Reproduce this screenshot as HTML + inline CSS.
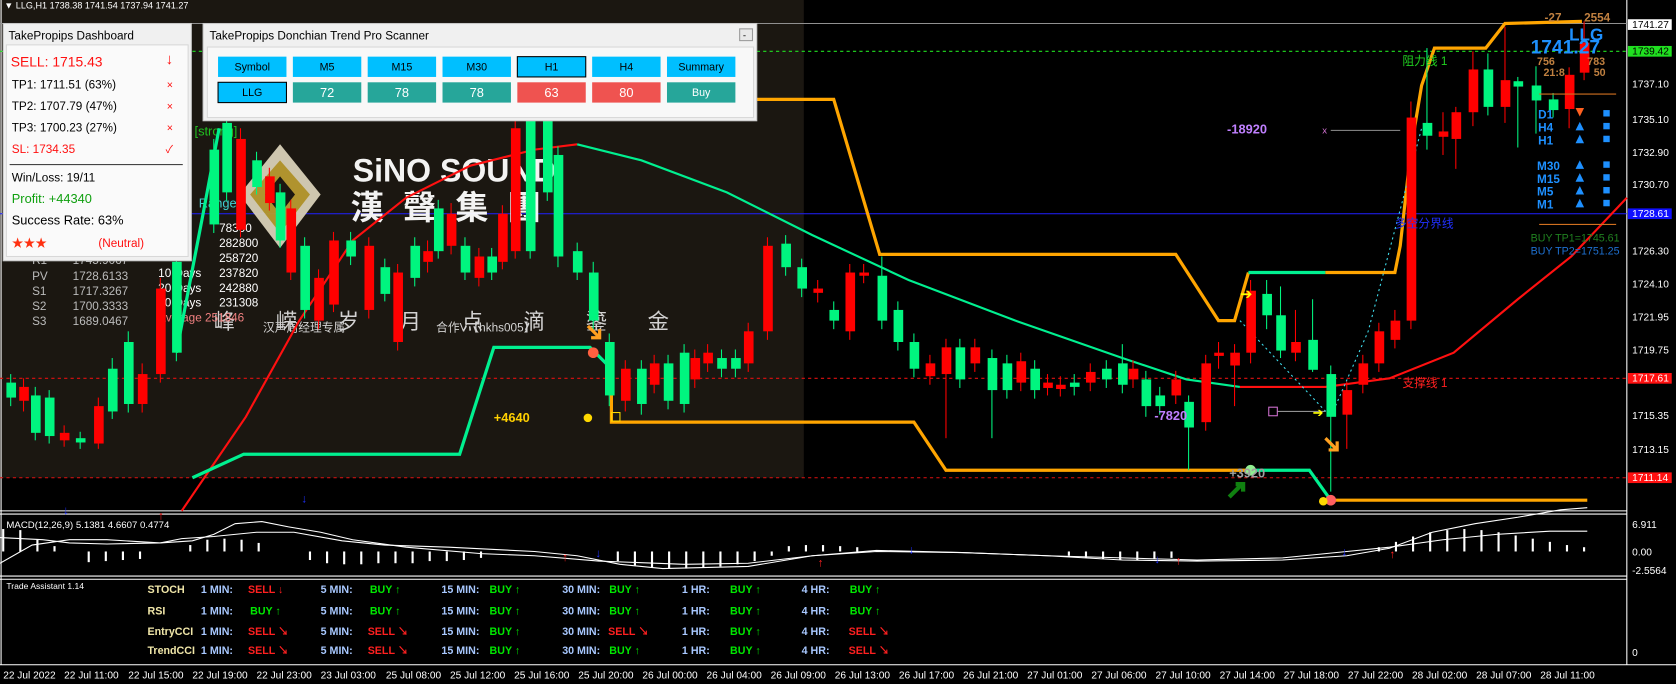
<!DOCTYPE html>
<html><head><meta charset="utf-8"><style>
html,body{margin:0;padding:0;background:#000;overflow:hidden}
svg{display:block}
text{font-family:"Liberation Sans","Noto Sans CJK SC",sans-serif}
.g rect{fill:#00f57f}.g line{stroke:#00f57f;stroke-width:1}
.r rect{fill:#ff0000}.r line{stroke:#ff0000;stroke-width:1}
.ax{font-size:9.5px;fill:#fff}
.ta{font-size:10px;font-weight:bold}
.lb{fill:#a8c8ff}.nm{fill:#f0e6a8}.by{fill:#00e800}.sl{fill:#ff2020}
.bt{font-size:10px;fill:#000;text-anchor:middle}
</style></head><body>
<svg width="1676" height="684" viewBox="0 0 1568 640" preserveAspectRatio="none" xmlns="http://www.w3.org/2000/svg">
<rect width="1568" height="640" fill="#000"/>
<rect x="0" y="0" width="752" height="447" fill="#1b1711"/>
<!-- borders -->
<line x1="1522" y1="0" x2="1522" y2="622" stroke="#fff"/>
<line x1="0" y1="478" x2="1522" y2="478" stroke="#fff"/>
<line x1="0" y1="481" x2="1522" y2="481" stroke="#fff"/>
<line x1="0" y1="539" x2="1522" y2="539" stroke="#fff"/>
<line x1="0" y1="542" x2="1522" y2="542" stroke="#fff"/>
<line x1="0" y1="622" x2="1568" y2="622" stroke="#fff"/>
<line x1="1" y1="0" x2="1" y2="622" stroke="#fff"/>
<!-- horizontal lines -->
<line x1="0" y1="22" x2="1522" y2="22" stroke="#909090"/>
<line x1="0" y1="48" x2="1522" y2="48" stroke="#20e020" stroke-dasharray="3,3"/>
<line x1="0" y1="200" x2="1522" y2="200" stroke="#2020ff"/>
<line x1="0" y1="354" x2="1522" y2="354" stroke="#e01010" stroke-dasharray="3,3"/>
<line x1="0" y1="447" x2="1522" y2="447" stroke="#e01010" stroke-dasharray="3,3"/>
<!-- watermark -->
<g opacity="0.95">
<polygon points="262,135 300,182 262,232 224,182" fill="#d8d0b8"/>
<polygon points="262,150 290,182 262,218 234,182" fill="#b89a30"/>
<polygon points="262,165 276,182 262,200 248,182" fill="#1b1711"/>
<text x="330" y="170" font-size="30" font-weight="bold" fill="#fff">SiNO SOUND</text>
<text x="328" y="205" font-size="31" font-weight="bold" fill="#fff" letter-spacing="18">漢聲集團</text>
<text x="200" y="308" font-size="20" fill="#ddd" letter-spacing="38">峰嵘岁月点滴鎏金</text>
<text x="246" y="310" font-size="11" fill="#ddd">汉声周经理专属</text>
<text x="408" y="310" font-size="11" fill="#ddd">合作V【hkhs005】</text>
</g>
<g font-size="11" fill="#bbb">
<text x="30" y="247">R1</text><text x="68" y="247">1745.9067</text>
<text x="30" y="262">PV</text><text x="68" y="262">1728.6133</text>
<text x="30" y="276">S1</text><text x="68" y="276">1717.3267</text>
<text x="30" y="290">S2</text><text x="68" y="290">1700.3333</text>
<text x="30" y="304">S3</text><text x="68" y="304">1689.0467</text>
</g>
<g font-size="11" fill="#fff">
<text x="205" y="217">78300</text><text x="205" y="231">282800</text><text x="205" y="245">258720</text>
<text x="148" y="259">10 Days</text><text x="205" y="259">237820</text>
<text x="148" y="273">20 Days</text><text x="205" y="273">242880</text>
<text x="148" y="287">50 Days</text><text x="205" y="287">231308</text>
<text x="148" y="301" fill="#f08080">Average  251846</text>
</g>
<text x="182" y="127" font-size="12" fill="#20c020">[strong]</text>
<text x="186" y="194" font-size="12" fill="#40d0d0">Range+</text>
<!-- MAs -->
<polyline points="170,478 230,390 280,300 330,225 380,185 440,155 500,140 540,135" fill="none" stroke="#ff1010" stroke-width="2"/>
<polyline points="540,135 600,150 680,180 760,220 850,262 950,300 1050,335 1110,355 1160,362" fill="none" stroke="#00f090" stroke-width="2"/>
<polyline points="1160,362 1240,362 1300,354 1360,330 1420,280 1470,240 1522,185" fill="none" stroke="#ff1010" stroke-width="2"/>
<!-- donchian -->
<polyline points="180,447 228,425 430,425 462,325 552,325 572,345" fill="none" stroke="#00f090" stroke-width="3"/>
<polyline points="165,330 190,200 205,120" fill="none" stroke="#00f090" stroke-width="3"/>
<polyline points="572,345 572,395 855,395 885,440 1168,440" fill="none" stroke="#ffa500" stroke-width="3"/>
<polyline points="1168,440 1225,440 1245,468" fill="none" stroke="#00f090" stroke-width="3"/>
<polyline points="1245,468 1485,468" fill="none" stroke="#ffa500" stroke-width="3"/>
<polyline points="700,93 780,93 823,238 1100,238 1140,300 1155,300 1168,255" fill="none" stroke="#ffa500" stroke-width="3"/>
<polyline points="1168,255 1240,255" fill="none" stroke="#00f090" stroke-width="3"/>
<polyline points="1240,255 1305,255 1310,230 1320,140 1330,80 1342,45 1390,45 1408,22 1480,20" fill="none" stroke="#ffa500" stroke-width="3"/>
<polyline points="1160,300 1245,390 1280,310 1330,120" fill="none" stroke="#40e0f0" stroke-dasharray="2,3"/>
<!-- candles -->
<g class="g"><line x1="10" y1="350" x2="10" y2="380"/><rect x="6" y="358" width="9" height="14"/></g>
<g class="r"><line x1="22" y1="354" x2="22" y2="385"/><rect x="18" y="362" width="9" height="13"/></g>
<g class="g"><line x1="33" y1="362" x2="33" y2="412"/><rect x="29" y="370" width="9" height="35"/></g>
<g class="g"><line x1="46" y1="365" x2="46" y2="415"/><rect x="42" y="372" width="9" height="36"/></g>
<g class="r"><line x1="60" y1="398" x2="60" y2="418"/><rect x="56" y="405" width="9" height="7"/></g>
<g class="g"><line x1="75" y1="404" x2="75" y2="420"/><rect x="71" y="410" width="9" height="4"/></g>
<g class="r"><line x1="92" y1="372" x2="92" y2="420"/><rect x="88" y="380" width="9" height="35"/></g>
<g class="g"><line x1="105" y1="335" x2="105" y2="392"/><rect x="101" y="345" width="9" height="40"/></g>
<g class="g"><line x1="120" y1="310" x2="120" y2="386"/><rect x="116" y="320" width="9" height="58"/></g>
<g class="r"><line x1="133" y1="340" x2="133" y2="386"/><rect x="129" y="350" width="9" height="28"/></g>
<g class="r"><line x1="150" y1="260" x2="150" y2="358"/><rect x="146" y="270" width="9" height="80"/></g>
<g class="g"><line x1="165" y1="235" x2="165" y2="338"/><rect x="161" y="245" width="9" height="85"/></g>
<g class="g"><line x1="200" y1="130" x2="200" y2="218"/><rect x="196" y="140" width="9" height="70"/></g>
<g class="g"><line x1="212" y1="105" x2="212" y2="188"/><rect x="208" y="115" width="9" height="65"/></g>
<g class="r"><line x1="225" y1="120" x2="225" y2="222"/><rect x="221" y="130" width="9" height="85"/></g>
<g class="g"><line x1="240" y1="142" x2="240" y2="182"/><rect x="236" y="150" width="9" height="25"/></g>
<g class="r"><line x1="252" y1="157" x2="252" y2="197"/><rect x="248" y="165" width="9" height="25"/></g>
<g class="g"><line x1="262" y1="172" x2="262" y2="232"/><rect x="258" y="180" width="9" height="45"/></g>
<g class="r"><line x1="272" y1="187" x2="272" y2="262"/><rect x="268" y="195" width="9" height="60"/></g>
<g class="g"><line x1="285" y1="222" x2="285" y2="298"/><rect x="281" y="230" width="9" height="60"/></g>
<g class="r"><line x1="298" y1="252" x2="298" y2="308"/><rect x="294" y="260" width="9" height="40"/></g>
<g class="r"><line x1="312" y1="217" x2="312" y2="292"/><rect x="308" y="225" width="9" height="60"/></g>
<g class="g"><line x1="328" y1="217" x2="328" y2="248"/><rect x="324" y="225" width="9" height="15"/></g>
<g class="r"><line x1="345" y1="222" x2="345" y2="298"/><rect x="341" y="230" width="9" height="60"/></g>
<g class="g"><line x1="360" y1="242" x2="360" y2="282"/><rect x="356" y="250" width="9" height="25"/></g>
<g class="r"><line x1="372" y1="247" x2="372" y2="328"/><rect x="368" y="255" width="9" height="65"/></g>
<g class="g"><line x1="388" y1="222" x2="388" y2="268"/><rect x="384" y="230" width="9" height="30"/></g>
<g class="r"><line x1="400" y1="225" x2="400" y2="255"/><rect x="396" y="235" width="9" height="10"/></g>
<g class="g"><line x1="410" y1="187" x2="410" y2="242"/><rect x="406" y="195" width="9" height="40"/></g>
<g class="r"><line x1="422" y1="190" x2="422" y2="238"/><rect x="418" y="200" width="9" height="30"/></g>
<g class="g"><line x1="435" y1="222" x2="435" y2="262"/><rect x="431" y="230" width="9" height="25"/></g>
<g class="r"><line x1="448" y1="232" x2="448" y2="268"/><rect x="444" y="240" width="9" height="20"/></g>
<g class="g"><line x1="460" y1="232" x2="460" y2="262"/><rect x="456" y="240" width="9" height="15"/></g>
<g class="r"><line x1="470" y1="192" x2="470" y2="252"/><rect x="466" y="200" width="9" height="45"/></g>
<g class="r"><line x1="482" y1="110" x2="482" y2="242"/><rect x="478" y="120" width="9" height="115"/></g>
<g class="g"><line x1="496" y1="85" x2="496" y2="242"/><rect x="492" y="95" width="9" height="140"/></g>
<g class="g"><line x1="512" y1="100" x2="512" y2="188"/><rect x="508" y="110" width="9" height="70"/></g>
<g class="g"><line x1="522" y1="137" x2="522" y2="250"/><rect x="518" y="145" width="9" height="95"/></g>
<g class="g"><line x1="540" y1="227" x2="540" y2="262"/><rect x="536" y="235" width="9" height="20"/></g>
<g class="g"><line x1="555" y1="245" x2="555" y2="310"/><rect x="551" y="255" width="9" height="45"/></g>
<g class="g"><line x1="570" y1="312" x2="570" y2="380"/><rect x="566" y="320" width="9" height="50"/></g>
<g class="r"><line x1="585" y1="337" x2="585" y2="385"/><rect x="581" y="345" width="9" height="30"/></g>
<g class="g"><line x1="600" y1="337" x2="600" y2="388"/><rect x="596" y="345" width="9" height="33"/></g>
<g class="r"><line x1="612" y1="332" x2="612" y2="368"/><rect x="608" y="340" width="9" height="20"/></g>
<g class="g"><line x1="625" y1="332" x2="625" y2="383"/><rect x="621" y="340" width="9" height="35"/></g>
<g class="g"><line x1="640" y1="322" x2="640" y2="386"/><rect x="636" y="330" width="9" height="48"/></g>
<g class="r"><line x1="650" y1="327" x2="650" y2="363"/><rect x="646" y="335" width="9" height="20"/></g>
<g class="r"><line x1="662" y1="322" x2="662" y2="348"/><rect x="658" y="330" width="9" height="10"/></g>
<g class="g"><line x1="675" y1="327" x2="675" y2="353"/><rect x="671" y="335" width="9" height="10"/></g>
<g class="g"><line x1="688" y1="327" x2="688" y2="353"/><rect x="684" y="335" width="9" height="10"/></g>
<g class="r"><line x1="700" y1="302" x2="700" y2="348"/><rect x="696" y="310" width="9" height="30"/></g>
<g class="r"><line x1="718" y1="222" x2="718" y2="318"/><rect x="714" y="230" width="9" height="80"/></g>
<g class="g"><line x1="735" y1="220" x2="735" y2="258"/><rect x="731" y="228" width="9" height="22"/></g>
<g class="g"><line x1="750" y1="242" x2="750" y2="278"/><rect x="746" y="250" width="9" height="20"/></g>
<g class="r"><line x1="765" y1="262" x2="765" y2="283"/><rect x="761" y="270" width="9" height="4"/></g>
<g class="g"><line x1="780" y1="282" x2="780" y2="308"/><rect x="776" y="290" width="9" height="10"/></g>
<g class="r"><line x1="795" y1="247" x2="795" y2="318"/><rect x="791" y="255" width="9" height="55"/></g>
<g class="r"><line x1="808" y1="247" x2="808" y2="265"/><rect x="804" y="255" width="9" height="3"/></g>
<g class="g"><line x1="825" y1="240" x2="825" y2="308"/><rect x="821" y="258" width="9" height="42"/></g>
<g class="g"><line x1="840" y1="282" x2="840" y2="328"/><rect x="836" y="290" width="9" height="30"/></g>
<g class="g"><line x1="855" y1="312" x2="855" y2="353"/><rect x="851" y="320" width="9" height="25"/></g>
<g class="r"><line x1="870" y1="332" x2="870" y2="360"/><rect x="866" y="340" width="9" height="12"/></g>
<g class="r"><line x1="885" y1="317" x2="885" y2="410"/><rect x="881" y="325" width="9" height="25"/></g>
<g class="g"><line x1="898" y1="317" x2="898" y2="363"/><rect x="894" y="325" width="9" height="30"/></g>
<g class="r"><line x1="912" y1="317" x2="912" y2="348"/><rect x="908" y="325" width="9" height="15"/></g>
<g class="g"><line x1="928" y1="327" x2="928" y2="410"/><rect x="924" y="335" width="9" height="30"/></g>
<g class="g"><line x1="942" y1="332" x2="942" y2="373"/><rect x="938" y="340" width="9" height="25"/></g>
<g class="r"><line x1="955" y1="330" x2="955" y2="366"/><rect x="951" y="338" width="9" height="20"/></g>
<g class="g"><line x1="968" y1="337" x2="968" y2="373"/><rect x="964" y="345" width="9" height="20"/></g>
<g class="r"><line x1="980" y1="350" x2="980" y2="370"/><rect x="976" y="358" width="9" height="5"/></g>
<g class="r"><line x1="992" y1="352" x2="992" y2="371"/><rect x="988" y="360" width="9" height="4"/></g>
<g class="g"><line x1="1005" y1="350" x2="1005" y2="370"/><rect x="1001" y="358" width="9" height="4"/></g>
<g class="r"><line x1="1020" y1="340" x2="1020" y2="366"/><rect x="1016" y="348" width="9" height="10"/></g>
<g class="g"><line x1="1035" y1="337" x2="1035" y2="363"/><rect x="1031" y="345" width="9" height="10"/></g>
<g class="g"><line x1="1050" y1="322" x2="1050" y2="368"/><rect x="1046" y="340" width="9" height="20"/></g>
<g class="r"><line x1="1060" y1="337" x2="1060" y2="363"/><rect x="1056" y="345" width="9" height="10"/></g>
<g class="g"><line x1="1072" y1="347" x2="1072" y2="390"/><rect x="1068" y="355" width="9" height="25"/></g>
<g class="g"><line x1="1085" y1="362" x2="1085" y2="388"/><rect x="1081" y="370" width="9" height="10"/></g>
<g class="r"><line x1="1100" y1="347" x2="1100" y2="378"/><rect x="1096" y="355" width="9" height="15"/></g>
<g class="g"><line x1="1112" y1="370" x2="1112" y2="440"/><rect x="1108" y="376" width="9" height="24"/></g>
<g class="r"><line x1="1128" y1="332" x2="1128" y2="403"/><rect x="1124" y="340" width="9" height="55"/></g>
<g class="r"><line x1="1140" y1="320" x2="1140" y2="345"/><rect x="1136" y="330" width="9" height="3"/></g>
<g class="r"><line x1="1155" y1="322" x2="1155" y2="380"/><rect x="1151" y="330" width="9" height="12"/></g>
<g class="r"><line x1="1170" y1="262" x2="1170" y2="340"/><rect x="1166" y="272" width="9" height="58"/></g>
<g class="g"><line x1="1185" y1="262" x2="1185" y2="308"/><rect x="1181" y="275" width="9" height="20"/></g>
<g class="g"><line x1="1198" y1="268" x2="1198" y2="335"/><rect x="1194" y="295" width="9" height="33"/></g>
<g class="r"><line x1="1212" y1="290" x2="1212" y2="338"/><rect x="1208" y="320" width="9" height="10"/></g>
<g class="g"><line x1="1228" y1="280" x2="1228" y2="348"/><rect x="1224" y="318" width="9" height="28"/></g>
<g class="g"><line x1="1245" y1="342" x2="1245" y2="460"/><rect x="1241" y="350" width="9" height="40"/></g>
<g class="r"><line x1="1260" y1="357" x2="1260" y2="420"/><rect x="1256" y="365" width="9" height="23"/></g>
<g class="r"><line x1="1275" y1="332" x2="1275" y2="368"/><rect x="1271" y="340" width="9" height="20"/></g>
<g class="r"><line x1="1290" y1="302" x2="1290" y2="348"/><rect x="1286" y="310" width="9" height="30"/></g>
<g class="r"><line x1="1305" y1="290" x2="1305" y2="326"/><rect x="1301" y="300" width="9" height="18"/></g>
<g class="r"><line x1="1320" y1="95" x2="1320" y2="308"/><rect x="1316" y="110" width="9" height="190"/></g>
<g class="g"><line x1="1335" y1="45" x2="1335" y2="140"/><rect x="1331" y="115" width="9" height="12"/></g>
<g class="r"><line x1="1350" y1="105" x2="1350" y2="145"/><rect x="1346" y="123" width="9" height="5"/></g>
<g class="r"><line x1="1362" y1="100" x2="1362" y2="158"/><rect x="1358" y="105" width="9" height="25"/></g>
<g class="r"><line x1="1378" y1="48" x2="1378" y2="118"/><rect x="1374" y="65" width="9" height="40"/></g>
<g class="g"><line x1="1392" y1="50" x2="1392" y2="108"/><rect x="1388" y="65" width="9" height="35"/></g>
<g class="r"><line x1="1408" y1="25" x2="1408" y2="115"/><rect x="1404" y="75" width="9" height="25"/></g>
<g class="g"><line x1="1420" y1="72" x2="1420" y2="138"/><rect x="1416" y="76" width="9" height="5"/></g>
<g class="g"><line x1="1437" y1="62" x2="1437" y2="125"/><rect x="1433" y="80" width="9" height="14"/></g>
<g class="g"><line x1="1453" y1="87" x2="1453" y2="110"/><rect x="1449" y="93" width="9" height="10"/></g>
<g class="r"><line x1="1468" y1="63" x2="1468" y2="120"/><rect x="1464" y="70" width="9" height="32"/></g>
<g class="r"><line x1="1482" y1="20" x2="1482" y2="75"/><rect x="1478" y="40" width="9" height="28"/></g>
<!-- markers -->
<circle cx="555" cy="330" r="5" fill="#ff6040"/>
<circle cx="550" cy="391" r="4" fill="#ffd800"/>
<rect x="572" y="386" width="8" height="8" fill="none" stroke="#ffd800"/>
<circle cx="1170" cy="440" r="5" fill="#90ee90"/>
<circle cx="1245" cy="468" r="5" fill="#ff6060"/>
<circle cx="1238" cy="469" r="4" fill="#ffd800"/>
<path d="M1150,465 L1162,453 M1156,453 L1163,453 L1163,460" stroke="#108010" stroke-width="4" fill="none"/>
<path d="M1240,410 L1250,420 M1243,421 L1251,421 L1251,413" stroke="#ffa020" stroke-width="3" fill="none"/>
<path d="M550,305 L560,315 M553,316 L561,316 L561,308" stroke="#ffa020" stroke-width="3" fill="none"/>
<line x1="1195" y1="385" x2="1240" y2="385" stroke="#909090"/>
<rect x="1187" y="381" width="8" height="8" fill="none" stroke="#d070d0"/>
<line x1="1245" y1="122" x2="1310" y2="122" stroke="#909090"/>
<text x="1237" y="125" font-size="9" fill="#d070d0">x</text>
<text x="1160" y="280" font-size="14" fill="#ffff00">➔</text>
<text x="1228" y="390" font-size="12" fill="#ffff00">➔</text>
<text x="1148" y="125" font-size="12" font-weight="bold" fill="#c080ff">-18920</text>
<text x="462" y="395" font-size="12" font-weight="bold" fill="#ffd000">+4640</text>
<text x="1080" y="393" font-size="12" font-weight="bold" fill="#c080ff">-7820</text>
<text x="1150" y="447" font-size="12" font-weight="bold" fill="#a0a0a0">+3920</text>
<text x="1312" y="61" font-size="11" fill="#20d020">阻力线 1</text>
<text x="1305" y="213" font-size="11" fill="#2030ff">多空分界线</text>
<text x="1312" y="362" font-size="11" fill="#ff2020">支撑线 1</text>
<!-- right info -->
<g font-weight="bold">
<text x="1445" y="20" font-size="11" fill="#c08040">-27</text>
<text x="1482" y="20" font-size="11" fill="#c08040">2554</text>
<text x="1468" y="38" font-size="16" fill="#1e90ff">LLG</text>
<text x="1432" y="50" font-size="18" fill="#1e90ff">1741.27</text>
<text x="1438" y="61" font-size="10" fill="#c08040">756</text><text x="1485" y="61" font-size="10" fill="#c08040">783</text>
<text x="1444" y="71" font-size="10" fill="#c08040">21:8</text><text x="1491" y="71" font-size="10" fill="#c08040">50</text>
<g font-size="11" fill="#1e90ff">
<text x="1439" y="111">D1</text><text x="1439" y="123">H4</text><text x="1439" y="135">H1</text>
<text x="1438" y="159">M30</text><text x="1438" y="171">M15</text><text x="1438" y="183">M5</text><text x="1438" y="195">M1</text>
</g></g>
<line x1="1440" y1="88" x2="1512" y2="88" stroke="#d07020"/>
<line x1="1440" y1="210" x2="1512" y2="210" stroke="#d07020"/>
<polygon points="1474,101 1482,101 1478,109" fill="#ff6020"/>
<g fill="#1e90ff">
<polygon points="1478,114 1482,122 1474,122"/><polygon points="1478,126 1482,134 1474,134"/>
<polygon points="1478,150 1482,158 1474,158"/><polygon points="1478,162 1482,170 1474,170"/>
<polygon points="1478,174 1482,182 1474,182"/><polygon points="1478,186 1482,194 1474,194"/>
<rect x="1500" y="103" width="6" height="6"/><rect x="1500" y="115" width="6" height="6"/><rect x="1500" y="127" width="6" height="6"/>
<rect x="1500" y="151" width="6" height="6"/><rect x="1500" y="163" width="6" height="6"/><rect x="1500" y="175" width="6" height="6"/><rect x="1500" y="187" width="6" height="6"/>
</g>
<text x="1432" y="226" font-size="10" fill="#208020">BUY TP1=1745.61</text>
<text x="1432" y="238" font-size="10" fill="#1e70d0">BUY TP2=1751.25</text>
<!-- price axis -->
<g class="ax">
<rect x="1523" y="18" width="41" height="10" fill="#fff"/><text x="1527" y="26" fill="#000">1741.27</text>
<rect x="1523" y="43" width="41" height="10" fill="#20e020"/><text x="1527" y="51" fill="#000">1739.42</text>
<text x="1527" y="82">1737.10</text><text x="1527" y="115">1735.10</text><text x="1527" y="146">1732.90</text>
<text x="1527" y="176">1730.70</text>
<rect x="1523" y="195" width="41" height="10" fill="#1010ff"/><text x="1527" y="203">1728.61</text>
<text x="1527" y="238">1726.30</text><text x="1527" y="269">1724.10</text><text x="1527" y="300">1721.95</text>
<text x="1527" y="331">1719.75</text>
<rect x="1523" y="349" width="41" height="10" fill="#ff1010"/><text x="1527" y="357">1717.61</text>
<text x="1527" y="392">1715.35</text><text x="1527" y="424">1713.15</text>
<rect x="1523" y="442" width="41" height="10" fill="#ff1010"/><text x="1527" y="450">1711.14</text>
<text x="1527" y="494">6.911</text><text x="1527" y="520">0.00</text><text x="1527" y="537">-2.5564</text>
<text x="1527" y="614">0</text>
</g>
<!-- MACD -->
<text x="6" y="494" font-size="9" fill="#fff">MACD(12,26,9) 5.1381 4.6607 0.4774</text>
<polyline points="0,527 30,510 65,505 100,505 150,508 180,506 200,500 220,490 245,488 270,493 300,498 330,505 380,512 450,518 500,520 560,525 640,528 700,527 760,520 820,516 900,517 980,520 1050,522 1120,524 1200,522 1260,516 1300,512 1350,505 1400,500 1450,497 1485,497" fill="none" stroke="#fff"/>
<polyline points="0,503 40,505 65,508 100,509 150,508 170,504 200,502 240,498 275,498 320,506 360,510 420,512 500,516 540,520 580,528 620,532 700,530 760,520 820,515 900,517 980,520 1050,524 1120,525 1200,524 1260,520 1300,513 1340,498 1380,490 1420,484 1460,477 1485,475" fill="none" stroke="#fff"/>
<g stroke="#fff" stroke-width="2">
<line x1="3" y1="516" x2="3" y2="495"/><line x1="19" y1="516" x2="19" y2="496"/><line x1="35" y1="516" x2="35" y2="505"/><line x1="51" y1="516" x2="51" y2="511"/>
<line x1="83" y1="516" x2="83" y2="526"/><line x1="99" y1="516" x2="99" y2="525"/><line x1="115" y1="516" x2="115" y2="524"/><line x1="131" y1="516" x2="131" y2="523"/>
<line x1="178" y1="516" x2="178" y2="510"/><line x1="194" y1="516" x2="194" y2="505"/><line x1="210" y1="516" x2="210" y2="504"/><line x1="226" y1="516" x2="226" y2="505"/><line x1="242" y1="516" x2="242" y2="508"/>
<line x1="290" y1="516" x2="290" y2="524"/><line x1="306" y1="516" x2="306" y2="527"/><line x1="322" y1="516" x2="322" y2="528"/><line x1="338" y1="516" x2="338" y2="528"/><line x1="354" y1="516" x2="354" y2="527"/><line x1="370" y1="516" x2="370" y2="527"/><line x1="386" y1="516" x2="386" y2="527"/><line x1="402" y1="516" x2="402" y2="525"/><line x1="418" y1="516" x2="418" y2="525"/><line x1="434" y1="516" x2="434" y2="524"/><line x1="450" y1="516" x2="450" y2="522"/>
<line x1="578" y1="516" x2="578" y2="525"/><line x1="594" y1="516" x2="594" y2="529"/><line x1="610" y1="516" x2="610" y2="531"/><line x1="626" y1="516" x2="626" y2="532"/><line x1="642" y1="516" x2="642" y2="532"/><line x1="658" y1="516" x2="658" y2="531"/><line x1="674" y1="516" x2="674" y2="530"/><line x1="690" y1="516" x2="690" y2="528"/><line x1="706" y1="516" x2="706" y2="525"/><line x1="722" y1="516" x2="722" y2="520"/>
<line x1="738" y1="516" x2="738" y2="511"/><line x1="754" y1="516" x2="754" y2="510"/><line x1="770" y1="516" x2="770" y2="510"/><line x1="786" y1="516" x2="786" y2="511"/><line x1="802" y1="516" x2="802" y2="512"/>
<line x1="1000" y1="516" x2="1000" y2="520"/><line x1="1016" y1="516" x2="1016" y2="522"/><line x1="1032" y1="516" x2="1032" y2="523"/><line x1="1048" y1="516" x2="1048" y2="524"/><line x1="1064" y1="516" x2="1064" y2="524"/><line x1="1080" y1="516" x2="1080" y2="523"/><line x1="1096" y1="516" x2="1096" y2="522"/>
<line x1="1290" y1="516" x2="1290" y2="512"/><line x1="1306" y1="516" x2="1306" y2="507"/><line x1="1322" y1="516" x2="1322" y2="502"/><line x1="1338" y1="516" x2="1338" y2="498"/><line x1="1354" y1="516" x2="1354" y2="496"/><line x1="1370" y1="516" x2="1370" y2="495"/><line x1="1386" y1="516" x2="1386" y2="496"/><line x1="1402" y1="516" x2="1402" y2="498"/><line x1="1418" y1="516" x2="1418" y2="501"/><line x1="1434" y1="516" x2="1434" y2="504"/><line x1="1450" y1="516" x2="1450" y2="507"/><line x1="1466" y1="516" x2="1466" y2="510"/><line x1="1482" y1="516" x2="1482" y2="512"/>
</g>
<g font-size="11">
<text x="59" y="481" fill="#2030ff">↓</text><text x="148" y="486" fill="#ff2020">↑</text><text x="282" y="470" fill="#2030ff">↓</text>
<text x="526" y="525" fill="#ff2020">↑</text><text x="557" y="521" fill="#2030ff">↓</text><text x="765" y="530" fill="#ff2020">↑</text>
<text x="850" y="518" fill="#2030ff">↓</text><text x="1080" y="527" fill="#2030ff">↓</text><text x="1100" y="528" fill="#ff2020">↑</text>
<text x="1255" y="520" fill="#2030ff">↓</text><text x="1300" y="522" fill="#ff2020">↑</text>
</g>
<!-- trade assistant -->
<text x="6" y="551" font-size="8" fill="#fff">Trade Assistant 1.14</text>
<g class="ta">
<text x="138" y="555" class="nm">STOCH</text><text x="138" y="575" class="nm">RSI</text><text x="138" y="594" class="nm">EntryCCI</text><text x="138" y="612" class="nm">TrendCCI</text>
<g class="lb">
<text x="188" y="555">1 MIN:</text><text x="188" y="575">1 MIN:</text><text x="188" y="594">1 MIN:</text><text x="188" y="612">1 MIN:</text>
<text x="300" y="555">5 MIN:</text><text x="300" y="575">5 MIN:</text><text x="300" y="594">5 MIN:</text><text x="300" y="612">5 MIN:</text>
<text x="413" y="555">15 MIN:</text><text x="413" y="575">15 MIN:</text><text x="413" y="594">15 MIN:</text><text x="413" y="612">15 MIN:</text>
<text x="526" y="555">30 MIN:</text><text x="526" y="575">30 MIN:</text><text x="526" y="594">30 MIN:</text><text x="526" y="612">30 MIN:</text>
<text x="638" y="555">1 HR:</text><text x="638" y="575">1 HR:</text><text x="638" y="594">1 HR:</text><text x="638" y="612">1 HR:</text>
<text x="750" y="555">4 HR:</text><text x="750" y="575">4 HR:</text><text x="750" y="594">4 HR:</text><text x="750" y="612">4 HR:</text>
</g>
<text x="232" y="555" class="sl">SELL ↓</text><text x="234" y="575" class="by">BUY ↑</text><text x="232" y="594" class="sl">SELL ↘</text><text x="232" y="612" class="sl">SELL ↘</text>
<text x="346" y="555" class="by">BUY ↑</text><text x="346" y="575" class="by">BUY ↑</text><text x="344" y="594" class="sl">SELL ↘</text><text x="344" y="612" class="sl">SELL ↘</text>
<text x="458" y="555" class="by">BUY ↑</text><text x="458" y="575" class="by">BUY ↑</text><text x="458" y="594" class="by">BUY ↑</text><text x="458" y="612" class="by">BUY ↑</text>
<text x="570" y="555" class="by">BUY ↑</text><text x="570" y="575" class="by">BUY ↑</text><text x="569" y="594" class="sl">SELL ↘</text><text x="570" y="612" class="by">BUY ↑</text>
<text x="683" y="555" class="by">BUY ↑</text><text x="683" y="575" class="by">BUY ↑</text><text x="683" y="594" class="by">BUY ↑</text><text x="683" y="612" class="by">BUY ↑</text>
<text x="795" y="555" class="by">BUY ↑</text><text x="795" y="575" class="by">BUY ↑</text><text x="794" y="594" class="sl">SELL ↘</text><text x="794" y="612" class="sl">SELL ↘</text>
</g>
<!-- time axis -->
<g class="ax" font-size="9">
<text x="3" y="635">22 Jul 2022</text><text x="60" y="635">22 Jul 11:00</text><text x="120" y="635">22 Jul 15:00</text><text x="180" y="635">22 Jul 19:00</text><text x="240" y="635">22 Jul 23:00</text><text x="300" y="635">23 Jul 03:00</text><text x="361" y="635">25 Jul 08:00</text><text x="421" y="635">25 Jul 12:00</text><text x="481" y="635">25 Jul 16:00</text><text x="541" y="635">25 Jul 20:00</text><text x="601" y="635">26 Jul 00:00</text><text x="661" y="635">26 Jul 04:00</text><text x="721" y="635">26 Jul 09:00</text><text x="781" y="635">26 Jul 13:00</text><text x="841" y="635">26 Jul 17:00</text><text x="901" y="635">26 Jul 21:00</text><text x="961" y="635">27 Jul 01:00</text><text x="1021" y="635">27 Jul 06:00</text><text x="1081" y="635">27 Jul 10:00</text><text x="1141" y="635">27 Jul 14:00</text><text x="1201" y="635">27 Jul 18:00</text><text x="1261" y="635">27 Jul 22:00</text><text x="1321" y="635">28 Jul 02:00</text><text x="1381" y="635">28 Jul 07:00</text><text x="1441" y="635">28 Jul 11:00</text>
</g>
<text x="4" y="8" font-size="8.5" fill="#fff">▼ LLG,H1  1738.38 1741.54 1737.94 1741.27</text>
<!-- dashboard -->
<rect x="3" y="22" width="176" height="222" fill="#f0f0f0" stroke="#c8c8c8"/>
<text x="8" y="37" font-size="11" fill="#000">TakePropips Dashboard</text>
<rect x="6" y="42" width="170" height="198" fill="#fafafa" stroke="#d8d8d8"/>
<text x="10" y="62" font-size="13" fill="#ff1010">SELL: 1715.43</text>
<text x="155" y="60" font-size="14" font-weight="bold" fill="#ff1010">↓</text>
<g font-size="11" fill="#000">
<text x="11" y="83">TP1: 1711.51 (63%)</text><text x="11" y="103">TP2: 1707.79 (47%)</text><text x="11" y="123">TP3: 1700.23 (27%)</text>
</g>
<g font-size="10" fill="#ff1010"><text x="156" y="83">×</text><text x="156" y="103">×</text><text x="156" y="123">×</text><text x="155" y="143">✓</text></g>
<text x="11" y="143" font-size="11" fill="#ff1010">SL:    1734.35</text>
<line x1="9" y1="154" x2="171" y2="154" stroke="#444"/>
<text x="11" y="170" font-size="11" fill="#000">Win/Loss: 19/11</text>
<text x="11" y="190" font-size="12" fill="#10a010">Profit: +44340</text>
<text x="11" y="210" font-size="12" fill="#000">Success Rate: 63%</text>
<text x="11" y="231" font-size="11" fill="#ff3010">★★★</text>
<text x="92" y="231" font-size="11" fill="#ff1010">(Neutral)</text>
<!-- scanner -->
<rect x="190" y="22" width="518" height="91" fill="#f0f0f0" stroke="#c8c8c8"/>
<text x="196" y="37" font-size="11" fill="#000">TakePropips Donchian Trend Pro Scanner</text>
<rect x="692" y="27" width="12" height="11" fill="#e8e8e8" stroke="#999"/><text x="695" y="36" font-size="9">-</text>
<rect x="194" y="44" width="511" height="66" fill="#f8f8f8" stroke="#d8d8d8"/>
<g>
<rect x="204" y="53" width="64" height="19" fill="#00bfff"/><text x="236" y="66" class="bt">Symbol</text>
<rect x="274" y="53" width="64" height="19" fill="#00bfff"/><text x="306" y="66" class="bt">M5</text>
<rect x="344" y="53" width="64" height="19" fill="#00bfff"/><text x="376" y="66" class="bt">M15</text>
<rect x="414" y="53" width="64" height="19" fill="#00bfff"/><text x="446" y="66" class="bt">M30</text>
<rect x="484" y="53" width="64" height="19" fill="#00bfff" stroke="#000"/><text x="516" y="66" class="bt">H1</text>
<rect x="554" y="53" width="64" height="19" fill="#00bfff"/><text x="586" y="66" class="bt">H4</text>
<rect x="624" y="53" width="64" height="19" fill="#00bfff"/><text x="656" y="66" class="bt">Summary</text>
<rect x="204" y="77" width="64" height="19" fill="#00bfff" stroke="#000"/><text x="236" y="90" class="bt">LLG</text>
<rect x="274" y="77" width="64" height="19" fill="#26a69a"/><text x="306" y="91" class="bt" fill="#fff" style="fill:#fff;font-size:12px">72</text>
<rect x="344" y="77" width="64" height="19" fill="#26a69a"/><text x="376" y="91" class="bt" style="fill:#fff;font-size:12px">78</text>
<rect x="414" y="77" width="64" height="19" fill="#26a69a"/><text x="446" y="91" class="bt" style="fill:#fff;font-size:12px">78</text>
<rect x="484" y="77" width="64" height="19" fill="#ef5350"/><text x="516" y="91" class="bt" style="fill:#fff;font-size:12px">63</text>
<rect x="554" y="77" width="64" height="19" fill="#ef5350"/><text x="586" y="91" class="bt" style="fill:#fff;font-size:12px">80</text>
<rect x="624" y="77" width="64" height="19" fill="#26a69a"/><text x="656" y="90" class="bt" style="fill:#fff">Buy</text>
</g>
</svg>
</body></html>
